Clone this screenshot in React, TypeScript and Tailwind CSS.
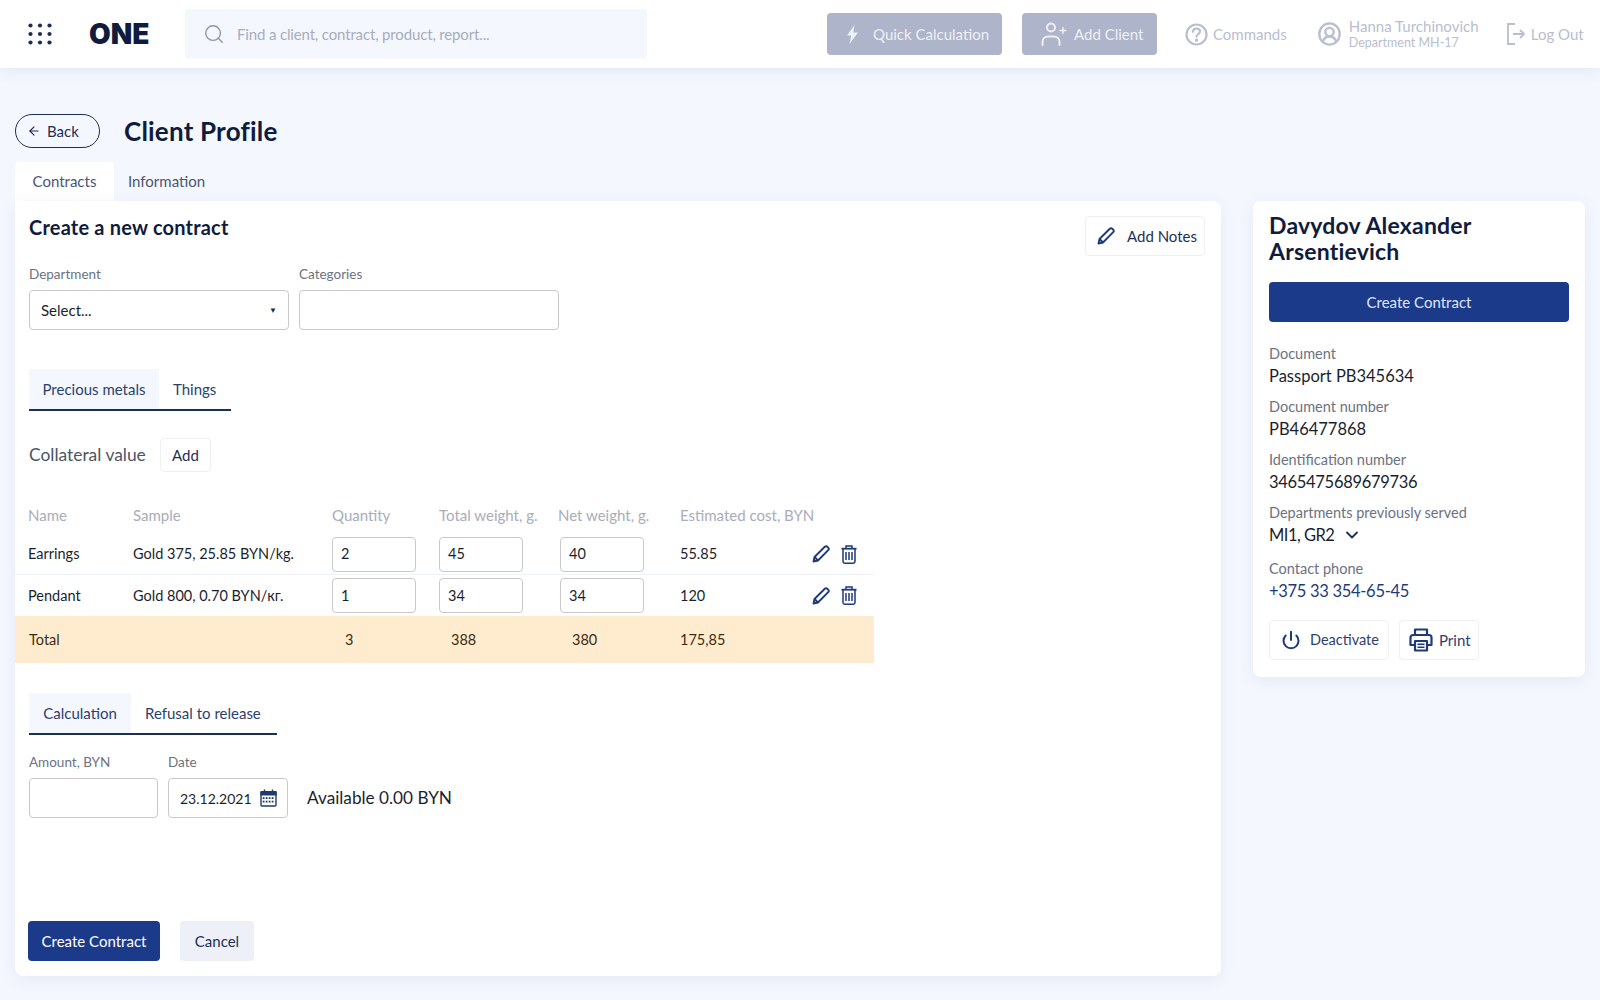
import React from "react";
import { ArrowLeft, Search, ChevronDown, Power } from "lucide-react";

const Grid = () => (
  <svg width="24" height="22" viewBox="0 0 24 22" className="text-[#1a2e5a]" fill="currentColor">
    {[2.5, 12, 21.5].flatMap((x) => [2.5, 11, 19.5].map((y) => <circle key={x + "-" + y} cx={x} cy={y} r="2.1" />))}
  </svg>
);

const Bolt = () => (
  <svg width="11" height="19" viewBox="0 0 11 19" fill="#eef0f6"><path d="M7.500 0 0 10.500h4.200L2.500 19 11 7.500H6.300z" /></svg>
);

const UserAdd = () => (
  <svg width="26" height="24" viewBox="0 0 26 24" fill="none" stroke="#eef0f6" strokeWidth="2" strokeLinecap="round">
    <circle cx="10" cy="5.500" r="4" />
    <path d="M1.500 23v-3c0-3.500 2.500-5.500 5.500-5.500h6c3 0 5.500 2 5.500 5.500v3" />
    <path d="M19 8.500h6M22 5.500v6" strokeWidth="1.400" />
  </svg>
);

const Help = () => (
  <svg width="23" height="23" viewBox="0 0 23 23" fill="none" stroke="#b9bed0" strokeWidth="2.200" strokeLinecap="round">
    <circle cx="11.500" cy="11.500" r="10" />
    <path d="M8 8.800c0-2.100 1.600-3.300 3.500-3.300s3.500 1.200 3.500 3c0 2.700-3.500 2.600-3.500 5.200" />
    <circle cx="11.500" cy="17.200" r="0.600" fill="#b9bed0" />
  </svg>
);

const UserCircle = () => (
  <svg width="23" height="24" viewBox="0 0 23 24" fill="none" stroke="#b9bed0" strokeWidth="2.300">
    <ellipse cx="11.500" cy="12" rx="10.200" ry="10.700" />
    <circle cx="11.500" cy="10" r="4.200" />
    <path d="M4.800 20c.8-3.200 3.500-5.500 6.700-5.500s5.900 2.300 6.700 5.500" />
  </svg>
);

const PencilIcon = ({ size = 18 }: { size?: number }) => (
  <svg width={size} height={size} viewBox="0 0 18 18" fill="none" stroke="#1f3a7a" strokeWidth="1.900" strokeLinejoin="round">
    <path d="M1.500 16.500l1-4.500L12.800 1.800a1.800 1.800 0 0 1 2.500 0l.9.900a1.800 1.800 0 0 1 0 2.500L6 15.500z" />
    <path d="M2.500 12 6 15.500" />
  </svg>
);

const TrashIcon = () => (
  <svg width="16" height="19" viewBox="0 0 16 19" fill="none" stroke="#1f3a7a" strokeWidth="1.500">
    <path d="M0.500 3.700h15" strokeWidth="1.800" />
    <path d="M5 3.500V1h6v2.500" />
    <path d="M2 4v12.500c0 1 .7 1.700 1.700 1.700h8.600c1 0 1.700-.7 1.700-1.700V4" />
    <path d="M5 7v8M8 7v8M11 7v8" />
  </svg>
);

const PrinterIcon = () => (
  <svg width="24" height="24" viewBox="0 0 24 24" fill="none" stroke="#1f3a7a" strokeWidth="2.200" strokeLinejoin="round">
    <path d="M6 7V1.500h12V7" />
    <path d="M6 17H1.500V9.500A2.500 2.500 0 0 1 4 7h16a2.500 2.500 0 0 1 2.500 2.500V17H18" />
    <path d="M6 13h12v9.500H6z" />
    <path d="M8.500 16.300h7M8.500 19.300h7" strokeWidth="1.500" />
  </svg>
);

const Calendar = () => (
  <svg width="17" height="18" viewBox="0 0 17 18" fill="none" stroke="#1f3a6e" strokeWidth="1.400">
    <rect x="1" y="2.800" width="15" height="14.200" rx="1" />
    <path d="M1 3h15v2.800H1z" fill="#1f3a6e" />
    <path d="M4.500 0.500v3M12.500 0.500v3" />
    <g fill="#1f3a6e" stroke="none">
      {[3.500, 6.500, 9.500, 12.500].flatMap((x) => [9, 12.500].map((y) => <rect key={x + "-" + y} x={x - 0.800} y={y - 0.800} width="1.800" height="1.800" />))}
    </g>
  </svg>
);

const Field = ({ label, className, children }: { label: string; className: string; children?: React.ReactNode }) => (
  <div className={className}>
    <div className="mb-[6px] h-[19px] text-[13.500px] leading-[19px] text-[#6b7280]">{label}</div>
    <div className="flex h-[40px] items-center rounded-[4px] border border-[#c9c9cc] bg-white px-[11px] text-[15px] text-[#1a1f2e]">{children}</div>
  </div>
);

const TabBar = ({ active, other, widthClass, tabClass }: { active: string; other: string; widthClass: string; tabClass: string }) => (
  <div className={`flex h-[42px] border-b-2 border-[#1c2f55] text-[15px] text-[#2c4170] ${widthClass}`}>
    <div className={`flex h-[40px] items-center justify-center bg-[#f4f7fe] ${tabClass}`}>{active}</div>
    <div className="flex h-[40px] items-center pl-[14px]">{other}</div>
  </div>
);

const cell = "flex h-[35px] w-[84px] items-center rounded-[4px] border border-[#c9c9cc] pl-[8px] text-[14.500px]";

const Row = ({ name, sample, q, t, n, cost, border }: { name: string; sample: string; q: string; t: string; n: string; cost: string; border?: boolean }) => (
  <div className={`grid h-[41px] grid-cols-[105px_199px_107px_121px_120px_132px_auto] items-center pl-[13px] text-[14.500px] text-[#1a1f2e] ${border ? "border-b border-[#eef1f6]" : ""}`}>
    <div>{name}</div>
    <div>{sample}</div>
    <div className={cell}>{q}</div>
    <div className={cell}>{t}</div>
    <div className={cell}>{n}</div>
    <div>{cost}</div>
    <div className="flex items-center gap-[11px]">
      <PencilIcon />
      <TrashIcon />
    </div>
  </div>
);

const Info = ({ label, value, className, extra }: { label: string; value: string; className?: string; extra?: React.ReactNode }) => (
  <div className="mb-[9px]">
    <div className="h-[20px] text-[14.500px] leading-[20px] text-[#6b7280]">{label}</div>
    <div className={`flex h-[24px] items-center gap-[8px] text-[16.500px] ${className ?? "text-[#1a1f2e]"}`}>{value}{extra}</div>
  </div>
);

export default function App() {
  return (
    <div className="flex h-[1000px] w-[1600px] flex-col overflow-hidden bg-[#f4f7fe] font-['Lato',sans-serif]">
      <header className="flex h-[68px] items-center bg-white shadow-[0_2px_14px_rgba(60,80,140,0.10)]">
        <div className="ml-[28px] mr-[37px]"><Grid /></div>
        <div className="mr-[35px] w-[61px] font-['Inter',sans-serif] text-[28px] font-black text-[#101c3d]">ONE</div>
        <div className="flex h-[50px] w-[462px] items-center rounded-[4px] bg-[#f4f7fe] pl-[18px] text-[15px] tracking-[-0.15px] text-[#a8adbb]">
          <Search size={22} strokeWidth={1.500} className="mr-[12px] text-[#8f95a6]" />
          Find a client, contract, product, report...
        </div>
        <div className="ml-[180px] flex h-[42px] w-[175px] items-center rounded-[4px] bg-[#aeb4c9] pl-[20px] text-[15px] text-[#eef0f6]">
          <Bolt />
          <span className="ml-[15px]">Quick Calculation</span>
        </div>
        <div className="ml-[20px] flex h-[42px] w-[135px] items-center rounded-[4px] bg-[#aeb4c9] pl-[19px] text-[15px] text-[#eef0f6]">
          <UserAdd />
          <span className="ml-[7px]">Add Client</span>
        </div>
        <div className="ml-[28px]"><Help /></div>
        <span className="ml-[5px] text-[15px] text-[#b9bed0]">Commands</span>
        <div className="ml-[31px]"><UserCircle /></div>
        <div className="ml-[8px] w-[158px] text-[#b9bed0]">
          <div className="text-[15px] leading-[18px]">Hanna Turchinovich</div>
          <div className="text-[12.500px] leading-[16px]">Department MH-17</div>
        </div>
        <svg width="18" height="22" viewBox="0 0 18 22" fill="none" stroke="#b9bed0" strokeWidth="1.800">
          <path d="M8 1H1v20h7M6 11h11M13 7l4 4-4 4" />
        </svg>
        <span className="ml-[6px] text-[15px] text-[#b9bed0]">Log Out</span>
      </header>

      <div className="flex items-center pl-[15px] pt-[46px]">
        <div className="flex h-[34px] w-[85px] items-center gap-[6px] rounded-full border border-[#1c2f55] pl-[11px] text-[15px] text-[#1c2f55]">
          <ArrowLeft size={14} /> Back
        </div>
        <h1 className="ml-[24px] text-[26px] font-bold leading-[34px] tracking-[0.2px] text-[#101c3d]">Client Profile</h1>
      </div>

      <div className="ml-[15px] mt-[14px] flex h-[39px] text-[15px] text-[#4b5672]">
        <div className="flex w-[99px] items-center justify-center rounded-t-[4px] bg-white">Contracts</div>
        <div className="flex items-center pl-[14px]">Information</div>
      </div>

      <div className="flex items-start pl-[15px]">
        <main className="h-[775px] w-[1206px] rounded-b-[8px] rounded-tr-[8px] bg-white pt-[15px] shadow-[0_4px_16px_rgba(60,80,140,0.08)]">
          <div className="flex items-start justify-between pl-[14px] pr-[16px]">
            <h2 className="-mt-[1px] text-[20px] font-bold leading-[24px] tracking-[0.2px] text-[#101c3d]">Create a new contract</h2>
            <div className="flex h-[40px] w-[120px] items-center gap-[12px] rounded-[4px] border border-[#eef0f5] pl-[11px] text-[15px] text-[#1c2f55]">
              <PencilIcon /> Add Notes
            </div>
          </div>

          <div className="mt-[9px] flex gap-[10px] pl-[14px]">
            <Field label="Department" className="w-[260px]">
              <span className="flex-1">Select...</span>
              <span className="text-[8px] text-[#1c2f55]">▼</span>
            </Field>
            <Field label="Categories" className="w-[260px]" />
          </div>

          <div className="ml-[14px] mt-[39px]">
            <TabBar active="Precious metals" other="Things" widthClass="w-[202px]" tabClass="w-[130px]" />
          </div>

          <div className="mt-[27px] flex items-center pl-[14px]">
            <span className="w-[131px] text-[17.400px] text-[#4b5563]">Collateral value</span>
            <div className="flex h-[34px] w-[51px] items-center justify-center rounded-[4px] border border-[#eef0f5] text-[15px] text-[#1c2f55]">Add</div>
          </div>

          <div className="mt-[32px] w-[859px]">
            <div className="grid h-[22px] grid-cols-[105px_199px_107px_119px_122px_auto] items-center pl-[13px] text-[15px] text-[#a8adb8]">
              <div>Name</div><div>Sample</div><div>Quantity</div><div>Total weight, g.</div><div>Net weight, g.</div><div>Estimated cost, BYN</div>
            </div>
            <div className="mt-[8px]">
              <Row name="Earrings" sample="Gold 375, 25.85 BYN/kg." q="2" t="45" n="40" cost="55.85" border />
              <Row name="Pendant" sample="Gold 800, 0.70 BYN/кг." q="1" t="34" n="34" cost="120" />
            </div>
            <div className="grid h-[47px] grid-cols-[316px_106px_121px_108px_auto] items-center bg-[#ffeccf] pl-[14px] text-[14.500px] text-[#3d2c12]">
              <div>Total</div><div>3</div><div>388</div><div>380</div><div>175,85</div>
            </div>
          </div>

          <div className="ml-[14px] mt-[30px]">
            <TabBar active="Calculation" other="Refusal to release" widthClass="w-[248px]" tabClass="w-[102px]" />
          </div>

          <div className="mt-[18px] flex pl-[14px]">
            <Field label="Amount, BYN" className="w-[129px]" />
            <Field label="Date" className="ml-[10px] w-[120px]">
              <span className="flex-1 text-[14px]">23.12.2021</span>
              <span className="-mr-[1px]"><Calendar /></span>
            </Field>
            <div className="ml-[19px] mt-[25px] flex h-[40px] items-center text-[17.200px] text-[#1a1f2e]">Available 0.00 BYN</div>
          </div>

          <div className="mt-[103px] flex gap-[20px] pl-[13px]">
            <div className="flex h-[40px] w-[132px] items-center justify-center rounded-[4px] bg-[#1c3a8a] text-[15px] text-white">Create Contract</div>
            <div className="flex h-[40px] w-[74px] items-center justify-center rounded-[4px] bg-[#edf0f6] text-[15px] text-[#1c2f55]">Cancel</div>
          </div>
        </main>

        <aside className="ml-[32px] h-[476px] w-[332px] rounded-[8px] bg-white px-[16px] pt-[11px] shadow-[0_4px_16px_rgba(60,80,140,0.08)]">
          <h2 className="text-[23px] font-bold leading-[26px] tracking-[0.2px] text-[#101c3d]">Davydov Alexander Arsentievich</h2>
          <div className="mt-[18px] flex h-[40px] items-center justify-center rounded-[4px] bg-[#1c3a8a] text-[15px] text-[#dfe6fa]">Create Contract</div>
          <div className="mt-[22px]">
            <Info label="Document" value="Passport PB345634" />
            <Info label="Document number" value="PB46477868" />
            <Info label="Identification number" value="3465475689679736" className="tracking-[-0.3px] text-[#1a1f2e]" />
            <Info label="Departments previously served" value="MI1, GR2" className="tracking-[-0.5px] text-[#1a1f2e]" extra={<ChevronDown size={20} strokeWidth={2.200} className="text-[#1c2f55]" />} />
            <div className="h-[3px]" />
            <Info label="Contact phone" value="+375 33 354-65-45" className="tracking-[-0.3px] text-[#1f3a7a]" />
          </div>
          <div className="mt-[17px] flex gap-[10px]">
            <div className="flex h-[40px] w-[120px] items-center gap-[9px] rounded-[4px] border border-[#eef0f5] pl-[11px] text-[14.500px] text-[#2c4170]">
              <Power size={20} strokeWidth={2.400} className="text-[#1f3a7a]" /> Deactivate
            </div>
            <div className="flex h-[40px] w-[80px] items-center gap-[6px] rounded-[4px] border border-[#eef0f5] pl-[9px] text-[15px] text-[#2c4170]">
              <PrinterIcon /> Print
            </div>
          </div>
        </aside>
      </div>
    </div>
  );
}
